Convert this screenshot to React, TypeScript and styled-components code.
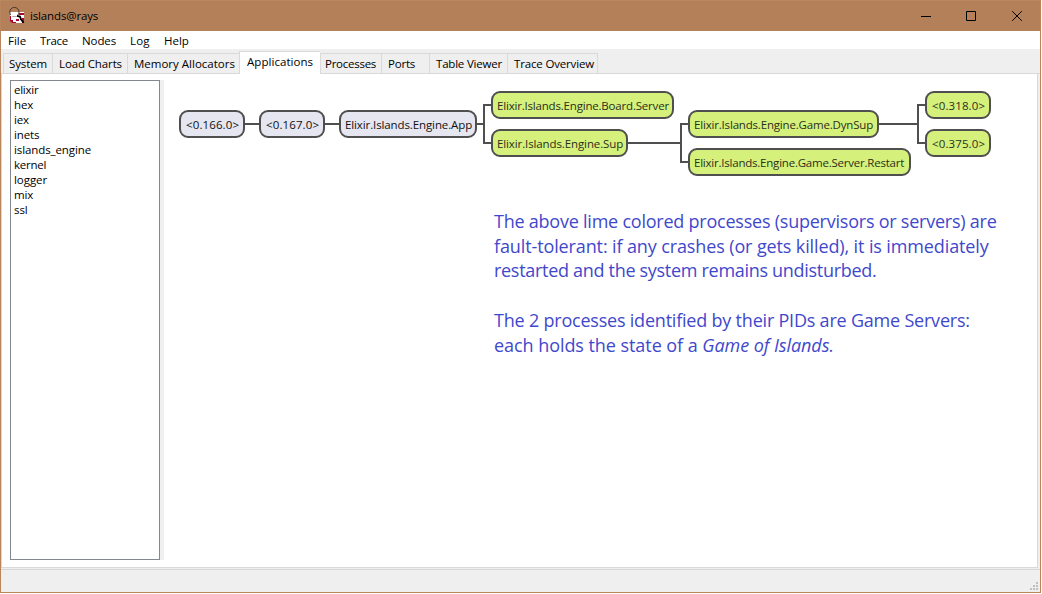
import React from 'react';
import styled, { createGlobalStyle, css } from 'styled-components';

const Global = createGlobalStyle`
  body { margin: 0; background: #fff; }
  * { box-sizing: border-box; }
`;

const Window = styled.div`
  display: flex;
  flex-direction: column;
  width: 1041px;
  height: 593px;
  border: 1px solid #b9855c;
  border-top: 0;
  background: #efefef;
  color: #000;
  font: 11.5px/15px 'Open Sans', 'Noto Sans', sans-serif;
  white-space: pre;
  cursor: default;
`;

const Label = styled.span<{ $track?: number }>`
  letter-spacing: ${(p) => p.$track ?? 0}px;
`;

const TitleBar = styled.header`
  display: flex;
  align-items: center;
  flex: none;
  height: 31px;
  padding-left: 7px;
  background: #b4805a;
  border-top: 1px solid #b98861;
`;

const AppIcon = styled.svg`
  width: 18px;
  height: 18px;
  margin-right: 4px;
`;

const WindowTitle = styled(Label)`
  padding-bottom: 2px;
`;

const Controls = styled.div`
  display: flex;
  margin-left: auto;
  height: 100%;
`;

const ControlButton = styled.div<{ $width: number }>`
  display: flex;
  align-items: center;
  justify-content: center;
  width: ${(p) => p.$width}px;
  padding-bottom: 1px;
`;

const ControlGlyph = styled.svg`
  display: block;
  width: 10px;
  height: 10px;
  fill: none;
  stroke: #000;
`;

const MenuBar = styled.nav`
  display: flex;
  align-items: center;
  flex: none;
  height: 18px;
  padding-left: 7px;
  background: #fff;
`;

const MenuItem = styled(Label)<{ $width: number }>`
  width: ${(p) => p.$width}px;
`;

const TabStrip = styled.div`
  display: flex;
  align-items: flex-end;
  flex: none;
  height: 25px;
  padding-left: 2px;
  border-bottom: 1px solid #d9d9d9;
`;

const Tab = styled.div<{ $width: number; $pad: number; $active?: boolean }>`
  flex: none;
  width: ${(p) => p.$width}px;
  height: 20px;
  padding: 2px 0 0 ${(p) => p.$pad}px;
  border: solid #d9d9d9;
  border-width: 1px 0 0 1px;
  ${(p) =>
    p.$active &&
    css`
      height: 23px;
      margin-bottom: -1px;
      background: #fff;
    `}
  &:last-child {
    border-right-width: 1px;
  }
`;

const Page = styled.main`
  display: flex;
  flex: none;
  width: 1037px;
  height: 494px;
  padding: 6px 0 8px 8px;
  background: #fff;
  border: 1px solid #d9d9d9;
  border-top: 0;
`;

const AppList = styled.ul`
  flex: none;
  width: 150px;
  height: 480px;
  margin: 0;
  padding: 2px 3px;
  list-style: none;
  border: 1px solid #828790;
`;

const AppItem = styled.li`
  height: 15px;
  line-height: 14px;
`;

const Sash = styled.div`
  flex: none;
  width: 4px;
  height: 480px;
  background: #f0f0f0;
`;

const Canvas = styled.section`
  position: relative;
  flex: 1;
`;

const Links = styled.svg`
  position: absolute;
  left: 0;
  top: 0;
  fill: none;
  stroke: #4f4f4f;
  stroke-width: 2;
`;

const Node = styled.div<{ $x: number; $y: number; $w: number; $lime?: boolean; $pad?: number }>`
  position: absolute;
  left: ${(p) => p.$x}px;
  top: ${(p) => p.$y}px;
  width: ${(p) => p.$w}px;
  height: 28px;
  padding-left: ${(p) => p.$pad ?? 4}px;
  line-height: 25px;
  border: 2px solid #4f4f4f;
  border-radius: 9px;
  background: ${(p) => (p.$lime ? '#d5f17c' : '#e6e6f0')};
  color: ${(p) => (p.$lime ? '#2b2f1a' : '#111')};
`;

const Note = styled.div`
  position: absolute;
  left: 330px;
  top: 129px;
  color: #3f48cc;
  font-size: 18px;
  line-height: 25px;
`;

const NoteLine = styled(Label)`
  display: block;
  height: 25px;
  &:nth-child(2) {
    height: 24px;
  }
`;

const StatusBar = styled.footer`
  display: flex;
  justify-content: flex-end;
  align-items: flex-end;
  flex: 1;
  margin-top: 1px;
  padding: 0 2px 2px 0;
  border-top: 1px solid #d7d7d7;
`;

const Grip = styled.svg`
  width: 8px;
  height: 8px;
  fill: #bfbfbf;
`;

const menus: [string, number, number][] = [
  ['File', 32, 0],
  ['Trace', 42, -0.28],
  ['Nodes', 48, -0.1],
  ['Log', 34, 0.15],
  ['Help', 30, 0],
];

const tabs: { name: string; width: number; pad: number; track: number; active?: boolean }[] = [
  { name: 'System', width: 49, pad: 5, track: -0.12 },
  { name: 'Load Charts', width: 75, pad: 6, track: -0.12 },
  { name: 'Memory Allocators', width: 112, pad: 6, track: 0 },
  { name: 'Applications', width: 81, pad: 7, track: 0.05, active: true },
  { name: 'Processes', width: 61, pad: 4, track: -0.26 },
  { name: 'Ports', width: 48, pad: 6, track: -0.2 },
  { name: 'Table Viewer', width: 78, pad: 6, track: -0.2 },
  { name: 'Trace Overview', width: 91, pad: 6, track: -0.16 },
];

const apps: [string, number][] = [
  ['elixir', -0.25],
  ['hex', -0.1],
  ['iex', -0.2],
  ['inets', -0.1],
  ['islands_engine', -0.1],
  ['kernel', -0.25],
  ['logger', -0.05],
  ['mix', -0.2],
  ['ssl', -0.1],
];

type TreeNode = { text: string; x: number; y: number; w: number; track: number; lime?: boolean; pad?: number };

const nodes: TreeNode[] = [
  { text: '<0.166.0>', x: 15, y: 30, w: 66, track: 0.12, pad: 5 },
  { text: '<0.167.0>', x: 95, y: 30, w: 66, track: 0.12, pad: 5 },
  { text: 'Elixir.Islands.Engine.App', x: 175, y: 30, w: 138, track: -0.11 },
  { text: 'Elixir.Islands.Engine.Board.Server', x: 327, y: 11, w: 183, track: -0.19, lime: true },
  { text: 'Elixir.Islands.Engine.Sup', x: 327, y: 49, w: 137, track: -0.11, lime: true },
  { text: 'Elixir.Islands.Engine.Game.DynSup', x: 524, y: 30, w: 191, track: -0.18, lime: true },
  { text: 'Elixir.Islands.Engine.Game.Server.Restart', x: 524, y: 68, w: 223, track: -0.22, lime: true },
  { text: '<0.318.0>', x: 761, y: 11, w: 66, track: 0.12, lime: true, pad: 5 },
  { text: '<0.375.0>', x: 761, y: 49, w: 66, track: 0.12, lime: true, pad: 5 },
];

export default function App() {
  return (
    <>
      <Global />
      <Window>
        <TitleBar>
          <AppIcon viewBox="0 0 18 18">
            <path d="M2 5h14v11H4l-2-3z" fill="#fff" />
            <path d="M2 9h1v4h2v2h3v1H4l-2-2zM11 6h5v2h-5zM8 12h3v2H8zM14 11h2v5h-2z" fill="#a90533" />
            <circle cx="6.4" cy="5" r="4.6" fill="none" stroke="#4a352a" strokeWidth="1" />
            <path d="M3 5.5h6v4H3z" fill="#fff" />
            <path d="M9 8.8l3 .8 1 2.6 2.6 3.6" fill="none" stroke="#000" strokeWidth="1.8" />
          </AppIcon>
          <WindowTitle $track={-0.14}>islands@rays</WindowTitle>
          <Controls>
            <ControlButton $width={44}>
              <ControlGlyph viewBox="0 0 10 10"><path d="M0 5.5h10" /></ControlGlyph>
            </ControlButton>
            <ControlButton $width={46}>
              <ControlGlyph viewBox="0 0 10 10"><path d="M.5.5h9v9h-9z" /></ControlGlyph>
            </ControlButton>
            <ControlButton $width={46}>
              <ControlGlyph viewBox="0 0 10 10"><path d="M.2.2l9.6 9.6M9.8.2L.2 9.8" /></ControlGlyph>
            </ControlButton>
          </Controls>
        </TitleBar>
        <MenuBar>
          {menus.map(([name, width, track]) => (
            <MenuItem key={name} $width={width} $track={track}>{name}</MenuItem>
          ))}
        </MenuBar>
        <TabStrip>
          {tabs.map((t) => (
            <Tab key={t.name} $width={t.width} $pad={t.pad} $active={t.active}>
              <Label $track={t.track}>{t.name}</Label>
            </Tab>
          ))}
        </TabStrip>
        <Page>
          <AppList>
            {apps.map(([name, track]) => (
              <AppItem key={name}><Label $track={track}>{name}</Label></AppItem>
            ))}
          </AppList>
          <Sash />
          <Canvas>
            <Links width="860" height="110">
              <path d="M81 44h14M161 44h14M313 44h7M327 25h-7v38h7M464 63h53M524 44h-7v38h7M715 44h39M761 25h-7v38h7" />
            </Links>
            {nodes.map((n) => (
              <Node key={n.text} $x={n.x} $y={n.y} $w={n.w} $lime={n.lime} $pad={n.pad}>
                <Label $track={n.track}>{n.text}</Label>
              </Node>
            ))}
            <Note>
              <NoteLine $track={-0.23}>The above lime colored processes (supervisors or servers) are</NoteLine>
              <NoteLine $track={-0.12}>fault-tolerant: if any crashes (or gets killed), it is immediately</NoteLine>
              <NoteLine $track={-0.3}>restarted and the system remains undisturbed.</NoteLine>
              <NoteLine />
              <NoteLine $track={-0.21}>The 2 processes identified by their PIDs are Game Servers:</NoteLine>
              <NoteLine $track={-0.06}>each holds the state of a <em>Game of Islands.</em></NoteLine>
            </Note>
          </Canvas>
        </Page>
        <StatusBar>
          <Grip viewBox="0 0 8 8">
            <path d="M6 0h2v2H6zM3 3h2v2H3zM6 3h2v2H6zM0 6h2v2H0zM3 6h2v2H3zM6 6h2v2H6z" />
          </Grip>
        </StatusBar>
      </Window>
    </>
  );
}
